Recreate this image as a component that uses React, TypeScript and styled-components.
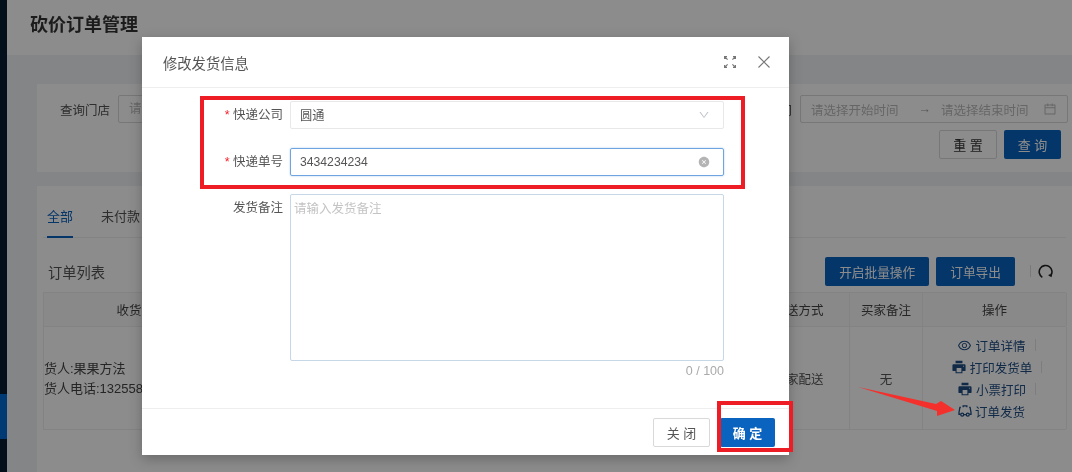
import React from "react";
import styled, { createGlobalStyle } from "styled-components";
import { AiOutlineEye, AiFillPrinter, AiFillCloseCircle, AiOutlineCalendar, AiOutlineDown } from "react-icons/ai";

const fontStack = `"Liberation Sans", "Noto Sans CJK SC", sans-serif`;

const GlobalStyle = createGlobalStyle`
  html, body {
    margin: 0;
    padding: 0;
    background: #f0f2f5;
    overflow: hidden;
  }
  * {
    box-sizing: border-box;
  }
`;

const ExpandIcon: React.FC = () => (
  <svg width="12" height="12" viewBox="0 0 12 12" fill="none" stroke="#777" strokeWidth="1.2">
    <path d="M0.6 3V0.6H3M0.6 0.6L3.6 3.6M11.4 3V0.6H9M11.4 0.6L8.4 3.6M0.6 9v2.4H3M0.6 11.4l3-3M11.4 9v2.4H9M11.4 11.4l-3-3" />
  </svg>
);

const CloseIcon: React.FC = () => (
  <svg width="12" height="12" viewBox="0 0 12 12" fill="none" stroke="#777" strokeWidth="1.1">
    <path d="M0.5 0.5L11.5 11.5M11.5 0.5L0.5 11.5" />
  </svg>
);

const RefreshIcon: React.FC = () => (
  <svg width="15" height="15" viewBox="0 0 16 16" fill="none" stroke="#222" strokeWidth="1.7">
    <path d="M4.6 14.2A6.8 6.8 0 1 1 13.6 12.4" />
    <path d="M11.4 11.6l2.4 1.2.4-2.6" />
  </svg>
);

const TruckIcon: React.FC = () => (
  <svg width="14" height="12" viewBox="0 0 15 13" fill="none" stroke="#1f4d82" strokeWidth="1.4">
    <path d="M3 2.5H2L1 8v2h1.6M5.5 2.5V1h4v1.5M12 2.5h1L14 8v2h-1.6M6.4 10.5h2.2" />
    <circle cx="4.5" cy="10.5" r="1.6" />
    <circle cx="10.5" cy="10.5" r="1.6" />
  </svg>
);

export default function App() {
  return (
    <Stage>
      <GlobalStyle />
      <Sidebar>
        <SidebarActive />
      </Sidebar>
      <Main>
        <Header>
          <PageTitle>砍价订单管理</PageTitle>
        </Header>
        <Content>
          <FilterCard>
            <FilterRow>
              <FilterLabel>查询门店</FilterLabel>
              <FilterInput>请选择门店</FilterInput>
              <SpaceFill />
              <FilterLabel>下单时间</FilterLabel>
              <DateRange>
                <span>请选择开始时间</span>
                <DateArrow>→</DateArrow>
                <span>请选择结束时间</span>
                <DateIcon>
                  <AiOutlineCalendar />
                </DateIcon>
              </DateRange>
            </FilterRow>
            <FilterActions>
              <PlainButton>重 置</PlainButton>
              <PrimaryButton>查 询</PrimaryButton>
            </FilterActions>
          </FilterCard>
          <ListCard>
            <Tabs>
              <Tab $active>全部</Tab>
              <Tab>未付款</Tab>
            </Tabs>
            <ListHead>
              <ListTitle>订单列表</ListTitle>
              <SpaceFill />
              <HeadButton>开启批量操作</HeadButton>
              <HeadButton>订单导出</HeadButton>
              <ToolDivider />
              <RefreshIcon />
            </ListHead>
            <Table>
              <HeadRow>
                <HeadCell $width={196}>收货信息</HeadCell>
                <HeadCell $width={508}>订单信息</HeadCell>
                <HeadCell $width={102}>配送方式</HeadCell>
                <HeadCell $width={73}>买家备注</HeadCell>
                <HeadCell $width={144}>操作</HeadCell>
              </HeadRow>
              <BodyRow>
                <ReceiverCell $width={704}>
                  <div>货人:果果方法</div>
                  <div>货人电话:13255881234</div>
                </ReceiverCell>
                <BodyCell $width={102}>
                  <ShipText>商家配送</ShipText>
                </BodyCell>
                <BodyCell $width={73}>无</BodyCell>
                <BodyCell $width={144}>
                  <Actions>
                    <ActionLink $divided>
                      <AiOutlineEye size={15} />
                      订单详情
                    </ActionLink>
                    <ActionLink $divided>
                      <AiFillPrinter size={16} />
                      打印发货单
                    </ActionLink>
                    <ActionLink $divided>
                      <AiFillPrinter size={16} />
                      小票打印
                    </ActionLink>
                    <ActionLink>
                      <TruckIcon />
                      订单发货
                    </ActionLink>
                  </Actions>
                </BodyCell>
              </BodyRow>
            </Table>
          </ListCard>
        </Content>
      </Main>
      <Mask />
      <Modal>
        <ModalHeader>
          <ModalTitle>修改发货信息</ModalTitle>
          <ModalTools>
            <ExpandIcon />
            <CloseIcon />
          </ModalTools>
        </ModalHeader>
        <ModalBody>
          <FormRow>
            <FormLabel $required>快递公司</FormLabel>
            <Field>
              <span>圆通</span>
              <AiOutlineDown size={12} color="#c0c4cc" />
            </Field>
          </FormRow>
          <FormRow>
            <FormLabel $required>快递单号</FormLabel>
            <Field $focused>
              <span>3434234234</span>
              <AiFillCloseCircle size={12} color="#b4b4b4" />
            </Field>
          </FormRow>
          <TextareaRow>
            <FormLabel>发货备注</FormLabel>
            <TextareaColumn>
              <Textarea>请输入发货备注</Textarea>
              <Counter>0 / 100</Counter>
            </TextareaColumn>
          </TextareaRow>
        </ModalBody>
        <ModalFooter>
          <CloseButton>关 闭</CloseButton>
          <ConfirmButton>确 定</ConfirmButton>
        </ModalFooter>
      </Modal>
      <FieldsMark />
      <ConfirmMark />
      <Arrow viewBox="0 0 100 40" width="100" height="40">
        <path d="M0 1L78 18 83 15 97 24 79 30 79 25Z" fill="#f4302c" />
      </Arrow>
    </Stage>
  );
}

const Stage = styled.div`
  position: relative;
  display: flex;
  width: 1072px;
  height: 472px;
  overflow: hidden;
  font-family: ${fontStack};
  font-size: 12.5px;
  color: #555;
  background: #f0f2f5;
  filter: blur(0.45px);
`;

const Sidebar = styled.div`
  flex: 0 0 7px;
  background: #061d31;
  padding-top: 394px;
`;

const SidebarActive = styled.div`
  height: 45px;
  background: #006ad6;
`;

const Main = styled.div`
  flex: 1;
  min-width: 0;
`;

const Header = styled.div`
  height: 55px;
  background: #fff;
  padding: 13px 23px;
`;

const PageTitle = styled.div`
  font-size: 18px;
  font-weight: 700;
  line-height: 24px;
  color: #333;
`;

const Content = styled.div`
  padding: 29px 0 0 30px;
`;

const FilterCard = styled.div`
  height: 88px;
  background: #fff;
  padding: 11px 4px 0 23px;
`;

const FilterRow = styled.div`
  display: flex;
  align-items: center;
`;

const FilterLabel = styled.div`
  margin-right: 8px;
  white-space: nowrap;
`;

const FilterInput = styled.div`
  width: 200px;
  height: 28px;
  border: 1px solid #d9d9d9;
  border-radius: 2px;
  padding: 0 10px;
  line-height: 26px;
  color: #bbb;
`;

const SpaceFill = styled.div`
  flex-grow: 1;
`;

const DateRange = styled.div`
  display: flex;
  align-items: center;
  width: 268px;
  height: 28px;
  border: 1px solid #d9d9d9;
  border-radius: 2px;
  padding: 0 10px;
  color: #bbb;
`;

const DateArrow = styled.span`
  margin: 0 10px 0 20px;
  color: #999;
`;

const DateIcon = styled.span`
  display: flex;
  margin-left: auto;
  font-size: 14px;
`;

const FilterActions = styled.div`
  display: flex;
  justify-content: flex-end;
  gap: 7px;
  margin: 7px 7px 0 0;
`;

const ButtonBase = styled.div`
  display: flex;
  align-items: center;
  justify-content: center;
  height: 29px;
  border-radius: 2px;
  font-size: 13px;
`;

const PlainButton = styled(ButtonBase)`
  width: 58px;
  background: #fff;
  border: 1px solid #d9d9d9;
  color: #333;
`;

const PrimaryButton = styled(ButtonBase)`
  width: 57px;
  background: #0a63bf;
  color: #fff;
`;

const ListCard = styled.div`
  margin-top: 14px;
  height: 300px;
  background: #fff;
  padding: 0 6px 0 6px;
`;

const Tabs = styled.div`
  display: flex;
  gap: 28px;
  height: 52px;
  padding: 0 4px;
  border-bottom: 1px solid #eee;
`;

const Tab = styled.div<{ $active?: boolean }>`
  height: 52px;
  padding-top: 22px;
  line-height: 18px;
  font-size: 13px;
  white-space: nowrap;
  color: ${(p) => (p.$active ? "#0a63bf" : "#555")};
  border-bottom: ${(p) => (p.$active ? "2px solid #0a63bf" : "none")};
`;

const ListHead = styled.div`
  display: flex;
  align-items: center;
  gap: 7px;
  height: 54px;
  padding: 12px 13px 0 5px;
`;

const ListTitle = styled.div`
  font-size: 14.25px;
`;

const HeadButton = styled(ButtonBase)`
  padding: 0 14px;
  background: #0a63bf;
  color: #fff;
  font-size: 12.7px;
`;

const ToolDivider = styled.div`
  width: 1px;
  height: 12px;
  margin-left: 8px;
  background: #ddd;
`;

const Table = styled.div`
  border-left: 1px solid #eee;
`;

const HeadRow = styled.div`
  display: flex;
  height: 35px;
  background: #fafafa;
  border-top: 1px solid #eee;
  border-bottom: 1px solid #eee;
`;

const BodyRow = styled.div`
  display: flex;
  height: 103px;
  border-bottom: 1px solid #eee;
`;

const HeadCell = styled.div<{ $width: number }>`
  flex: 0 0 ${(p) => p.$width}px;
  display: flex;
  align-items: center;
  justify-content: center;
  border-right: 1px solid #eee;
  color: #444;
`;

const BodyCell = styled(HeadCell)`
  color: #555;
`;

const ReceiverCell = styled.div<{ $width: number }>`
  flex: 0 0 ${(p) => p.$width}px;
  display: flex;
  flex-direction: column;
  justify-content: center;
  gap: 2px;
  padding-top: 2px;
  font-size: 13px;
  line-height: 18px;
  border-right: 1px solid #eee;
  color: #444;
`;

const ShipText = styled.div`
  white-space: nowrap;
`;

const Actions = styled.div`
  display: flex;
  flex-direction: column;
  align-items: center;
  gap: 3px;
  padding-left: 4px;
`;

const ActionLink = styled.div<{ $divided?: boolean }>`
  display: flex;
  align-items: center;
  gap: 3px;
  height: 19px;
  color: #1f4d82;
  white-space: nowrap;

  &::after {
    content: "";
    width: 1px;
    height: 12px;
    margin-left: 6px;
    background: ${(p) => (p.$divided ? "#e4e4e4" : "transparent")};
  }
`;

const Mask = styled.div`
  position: absolute;
  inset: 0;
  background: rgba(0, 0, 0, 0.45);
`;

const Modal = styled.div`
  position: absolute;
  left: 142px;
  top: 37px;
  display: flex;
  flex-direction: column;
  width: 647px;
  height: 418px;
  background: #fff;
  box-shadow: 0 4px 12px rgba(0, 0, 0, 0.25);
`;

const ModalHeader = styled.div`
  display: flex;
  align-items: center;
  justify-content: space-between;
  height: 51px;
  padding: 0 19px 0 21px;
  border-bottom: 1px solid #eee;
`;

const ModalTitle = styled.div`
  font-size: 14.3px;
  color: #555;
`;

const ModalTools = styled.div`
  display: flex;
  align-items: center;
  gap: 22px;
`;

const ModalBody = styled.div`
  flex: 1;
  padding-top: 13px;
`;

const FormRow = styled.div`
  display: flex;
  align-items: center;
  height: 28px;
  margin-bottom: 19px;
`;

const TextareaRow = styled.div`
  display: flex;
  margin-top: -1px;
`;

const FormLabel = styled.label<{ $required?: boolean }>`
  flex: 0 0 148px;
  padding-right: 7px;
  text-align: right;
  line-height: 29px;
  height: 28px;
  color: #555;

  &::before {
    content: ${(p) => (p.$required ? '"* "' : "none")};
    color: #f5222d;
  }
`;

const Field = styled.div<{ $focused?: boolean }>`
  display: flex;
  align-items: center;
  justify-content: space-between;
  width: 434px;
  height: 28px;
  padding: 0 13px 0 9px;
  border: 1px solid ${(p) => (p.$focused ? "#6ea5e0" : "#e8e8e8")};
  border-radius: 2px;
  box-shadow: ${(p) => (p.$focused ? "0 0 2px rgba(10, 99, 191, 0.35)" : "none")};
  font-size: 12.2px;
  color: #555;
`;

const TextareaColumn = styled.div`
  width: 434px;
`;

const Textarea = styled.div`
  height: 167px;
  padding: 6px 3px;
  border: 1px solid #c6d7e8;
  border-radius: 2px;
  line-height: 17px;
  color: #c4c4c4;
`;

const Counter = styled.div`
  margin-top: 3px;
  text-align: right;
  color: #aaa;
`;

const ModalFooter = styled.div`
  display: flex;
  justify-content: flex-end;
  gap: 10px;
  height: 47px;
  padding: 9px 14px 0 0;
  border-top: 1px solid #eee;
`;

const CloseButton = styled(ButtonBase)`
  width: 57px;
  background: #fff;
  border: 1px solid #d9d9d9;
  color: #555;
`;

const ConfirmButton = styled(ButtonBase)`
  width: 55px;
  background: #0a63bf;
  font-weight: 700;
  color: #fff;
`;

const FieldsMark = styled.div`
  position: absolute;
  left: 200px;
  top: 96px;
  width: 545px;
  height: 93px;
  border: 4px solid #ee1c25;
`;

const ConfirmMark = styled.div`
  position: absolute;
  left: 717px;
  top: 401px;
  width: 76px;
  height: 51px;
  border: 4px solid #ee1c25;
`;

const Arrow = styled.svg`
  position: absolute;
  left: 858px;
  top: 386px;
`;
